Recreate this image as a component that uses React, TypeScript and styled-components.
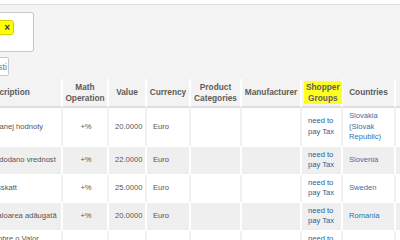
import React from 'react';
import styled, { createGlobalStyle } from 'styled-components';

const GlobalStyle = createGlobalStyle`
  html, body { margin: 0; padding: 0; background: #fff; overflow: hidden; }
  body { font-family: "Liberation Sans", Arial, sans-serif; }
`;

const Viewport = styled.div`
  width: 400px;
  height: 240px;
  overflow: hidden;
  padding-top: 4px;
  box-sizing: border-box;
`;

const Shifted = styled.div`
  margin-left: -41px;
`;

const FilterPanel = styled.div`
  border-top: 1px solid #dcdcdc;
  background: #f4f4f4;
  padding: 7px 0 3px;
  display: flex;
  flex-direction: column;
  align-items: flex-start;
  gap: 5px;
`;

const ChosenBox = styled.div`
  margin-left: 5px;
  width: 70px;
  height: 40px;
  box-sizing: border-box;
  border: 1px solid #c6c6c6;
  border-radius: 3px;
  background: #fff;
  padding: 3px 0 0 4px;
`;

const Tag = styled.span`
  display: inline-flex;
  align-items: center;
  justify-content: space-between;
  box-sizing: border-box;
  width: 45px;
  height: 15px;
  padding: 0 3px 0 3px;
  background: #ffff00;
  border: 1px solid #d2d200;
  border-radius: 3px;
  font-size: 8px;
  color: #333;
`;

const TagClose = styled.span`
  font-weight: bold;
  font-size: 10px;
  color: #3a3a3a;
  line-height: 1;
`;

const ClearButton = styled.button`
  margin-left: 17px;
  width: 33px;
  height: 19px;
  box-sizing: border-box;
  border: 1px solid #c8c8c8;
  border-radius: 2px;
  background: #fff;
  padding: 0 1px 0 0;
  font-family: "Liberation Sans", Arial, sans-serif;
  font-size: 9px;
  color: #6b7aa0;
  text-align: right;
`;

const Table = styled.table`
  width: 497px;
  table-layout: fixed;
  border-collapse: separate;
  border-spacing: 0;
  font-family: "Liberation Sans", Arial, sans-serif;
`;

const Th = styled.th<{ $w: number; $pr?: number }>`
  width: ${p => p.$w}px;
  box-sizing: border-box;
  background: #f3f3f3;
  border-right: 2px solid #fff;
  border-bottom: 2px solid #dedede;
  padding: 2px ${p => p.$pr ?? 2}px 2px 2px;
  font-size: 8.3px;
  line-height: 10.5px;
  font-weight: bold;
  color: #5c5c5c;
  text-align: center;
  vertical-align: middle;
  height: 27px;
`;

const Highlight = styled.span`
  display: inline-block;
  background: #ffff22;
  padding: 1px 2px;
`;

const Tr = styled.tr<{ $alt: boolean }>`
  background: ${p => (p.$alt ? '#efefef' : '#fff')};
`;

const Td = styled.td<{ $alt: boolean; $align?: string }>`
  box-sizing: border-box;
  border-right: 2px solid ${p => (p.$alt ? '#fff' : '#f1f1f1')};
  border-bottom: 1px solid #fff;
  padding: 3px 4px 3px 6px;
  font-size: 7.6px;
  line-height: 10.5px;
  color: #555;
  text-align: ${p => p.$align || 'left'};
  vertical-align: middle;
`;

const GroupLink = styled.span`
  color: #2b5c92;
`;

const CountryLink = styled.span`
  color: #3271ac;
`;

const headers: { label: string; w: number; hl?: boolean; pr?: number }[] = [
  { label: 'Description', w: 104, pr: 8 },
  { label: 'Math Operation', w: 46 },
  { label: 'Value', w: 38 },
  { label: 'Currency', w: 44 },
  { label: 'Product Categories', w: 51 },
  { label: 'Manufacturer', w: 60 },
  { label: 'Shopper Groups', w: 41, hl: true },
  { label: 'Countries', w: 53 },
  { label: 'Published', w: 60 },
];

const rows = [
  { d: 'Daň z pridanej hodnoty', v: '20.0000', c: 'Slovakia (Slovak Republic)' },
  { d: 'Davek na dodano vrednost', v: '22.0000', c: 'Slovenia' },
  { d: 'Mervärdesskatt', v: '25.0000', c: 'Sweden' },
  { d: 'Taxa pe valoarea adăugată', v: '20.0000', c: 'Romania' },
  { d: 'Imposto sobre o Valor Acrescentado', v: '23.0000', c: 'Portugal' },
];

export default function App() {
  return (
    <>
      <GlobalStyle />
      <Viewport>
        <Shifted>
          <FilterPanel>
            <ChosenBox>
              <Tag>
                <span>Default</span>
                <TagClose>×</TagClose>
              </Tag>
            </ChosenBox>
            <ClearButton>Počisti</ClearButton>
          </FilterPanel>
          <Table>
            <thead>
              <tr>
                {headers.map(h => (
                  <Th key={h.label} $w={h.w} $pr={h.pr}>
                    {h.hl ? (
                      <Highlight>
                        {h.label.split(' ')[0]}
                        <br />
                        {h.label.split(' ')[1]}
                      </Highlight>
                    ) : (
                      h.label
                    )}
                  </Th>
                ))}
              </tr>
            </thead>
            <tbody>
              {rows.map((r, i) => {
                const alt = i % 2 === 1;
                return (
                  <Tr key={i} $alt={alt}>
                    <Td $alt={alt}>{r.d}</Td>
                    <Td $alt={alt} $align="center">+%</Td>
                    <Td $alt={alt} $align="center">{r.v}</Td>
                    <Td $alt={alt}>Euro</Td>
                    <Td $alt={alt}></Td>
                    <Td $alt={alt}></Td>
                    <Td $alt={alt}><GroupLink>need to pay Tax</GroupLink></Td>
                    <Td $alt={alt}><CountryLink>{r.c}</CountryLink></Td>
                    <Td $alt={alt}></Td>
                  </Tr>
                );
              })}
            </tbody>
          </Table>
        </Shifted>
      </Viewport>
    </>
  );
}
